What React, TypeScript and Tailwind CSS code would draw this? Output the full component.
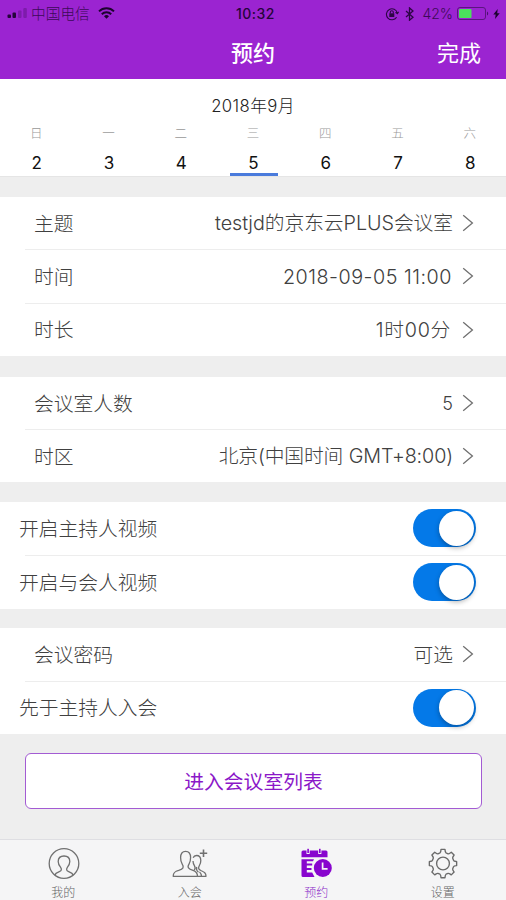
import type { ReactNode } from 'react';

function Chevron() {
  return (
    <svg className="ml-[9px] h-[18px] w-3 shrink-0" viewBox="0 0 12 18" fill="none" stroke="#707070" strokeWidth="1.3">
      <path d="M1.2 1.2 10.4 9 1.2 16.8" />
    </svg>
  );
}

function Switch() {
  return (
    <div className="flex h-[38px] w-[63px] items-center justify-end rounded-full bg-[#0479e8] pr-[2px]">
      <div className="h-[35px] w-[35px] rounded-full bg-white shadow-[0_2px_5px_rgba(0,0,0,0.3)]" />
    </div>
  );
}

function Group({ className, children }: { className: string; children: ReactNode }) {
  return (
    <section className={`flex flex-col bg-white text-[19.75px] font-light text-[#404040] ${className}`}>{children}</section>
  );
}

function Divider() {
  return <div className="ml-[25px] h-px shrink-0 bg-[#ededed]" />;
}

function LinkRow({ label, value, valueClass = '' }: { label: string; value: string; valueClass?: string }) {
  return (
    <div className="flex min-h-0 flex-1 items-center pl-[34px] pr-[32px]">
      <span className="pt-[3px] leading-none">{label}</span>
      <span className={`ml-auto whitespace-pre pt-[2px] leading-none ${valueClass}`}>{value}</span>
      <Chevron />
    </div>
  );
}

function SwitchRow({ label, className = '' }: { label: string; className?: string }) {
  return (
    <div className={`flex min-h-0 flex-1 items-center justify-between pl-[19px] pr-[30px] ${className}`}>
      <span className="pt-[3px] leading-none">{label}</span>
      <Switch />
    </div>
  );
}

const days = [
  ['日', '2'],
  ['一', '3'],
  ['二', '4'],
  ['三', '5'],
  ['四', '6'],
  ['五', '7'],
  ['六', '8'],
];

function StatusBar() {
  return (
    <div className="grid h-[27px] grid-cols-3 items-center pl-[7px] pr-[6px] text-[14px] leading-none text-[#3b0a58]">
      <div className="flex items-center">
        <svg className="h-[10px] w-[21px]" viewBox="0 0 21 10" fill="#25053b">
          <rect x="0.5" y="6.5" width="3.5" height="3.5" rx="1" />
          <rect x="5.5" y="4.5" width="3.5" height="5.5" rx="1" />
          <rect x="11" y="2.5" width="3.5" height="7.5" rx="1" opacity="0.25" />
          <rect x="16.3" y="0" width="3.5" height="10" rx="1" opacity="0.25" />
        </svg>
        <span className="ml-[3px] pt-[2px] text-[14.7px] font-light">中国电信</span>
        <svg className="ml-[8px] h-[12px] w-[17px]" viewBox="0 0 17 12" fill="none" stroke="#1c032e" strokeWidth="2">
          <path d="M1 4.4a10.7 10.7 0 0 1 15 0M3.8 7.2a6.7 6.7 0 0 1 9.4 0" />
          <path d="M8.5 11.8 6 9.3a3.6 3.6 0 0 1 5 0z" fill="#1c032e" stroke="none" />
        </svg>
      </div>
      <span className="pl-[4px] text-center text-[14px] font-medium tracking-[0.5px] text-[#25053b]">10:32</span>
      <div className="flex items-center justify-end">
        <svg className="h-[14px] w-[14px]" viewBox="0 0 14 14" fill="none" stroke="#2c0644" strokeWidth="1.1">
          <path d="M11.6 10.2A5.5 5.5 0 1 1 12.3 6M10.4 5.4l2 1.4 1.3-2" />
          <rect x="4.3" y="6.3" width="5" height="3.7" fill="#2c0644" stroke="none" />
          <path d="M5.3 6.5V5.2a1.5 1.5 0 0 1 3 0v1.3" />
        </svg>
        <svg className="ml-[6px] h-[14px] w-[9px]" viewBox="0 0 9 14" fill="none" stroke="#2c0644" strokeWidth="1.3">
          <path d="M1 4l7 6.2-3.5 3V.9L8 3.9 1 10.1" />
        </svg>
        <span className="ml-[8px] pt-px text-[14px] font-light">42%</span>
        <svg className="ml-[4px] h-[13px] w-[32px]" viewBox="0 0 32 13" fill="none">
          <rect x="0.5" y="0.5" width="28" height="12" rx="2.5" stroke="#5c1480" />
          <rect x="2" y="2" width="12.5" height="9" rx="0.8" fill="#4be05c" />
          <path d="M30 4.5c1.6.7 1.6 3.3 0 4z" fill="#4c0f6e" />
        </svg>
        <svg className="ml-[4px] h-[10px] w-[7px]" viewBox="0 0 7 10" fill="#1c032e">
          <path d="M4.7 0 .3 5.6h2.4L2 10l4.7-5.8H4.2z" />
        </svg>
      </div>
    </div>
  );
}

function ProfileIcon() {
  return (
    <svg className="ml-px h-8 w-8" viewBox="0 0 32 32" fill="none" stroke="#707070" strokeWidth="1.3">
      <circle cx="16" cy="16.5" r="14.8" />
      <path d="M6.800 28.300c.5-2 2-2.600 4.500-3.600 2.400-1 2.600-2.500 1.200-4.500-1.600-2-2.300-3.600-2.300-5.700 0-3.500 2.200-5.500 5.800-5.500s5.800 2 5.800 5.500c0 2.100-.7 3.700-2.300 5.700-1.400 2-1.200 3.500 1.200 4.500 2.500 1 4 1.600 4.500 3.600" />
    </svg>
  );
}

function JoinIcon() {
  return (
    <svg className="h-8 w-[36px]" viewBox="0 0 36 32" fill="none" stroke="#707070" strokeWidth="1.3" strokeLinejoin="round">
      <path d="M1.200 29.300h24.300c0-3.800-1.500-4.900-4.500-5.900-4.400-1.400-6.300-3-3.900-6.600 1.200-1.800 1.500-3.800 1.500-6.200 0-4-1.600-6.300-5-6.300s-5 2.300-5 6.300c0 2.400.3 4.400 1.500 6.200 2.400 3.600 1.100 5.200-3.400 6.600-4 1.100-5.500 2.300-5.500 5.900z" />
      <path d="M21.200 10.700c.5-1.400 1.600-2.200 3.300-2.200 2.700 0 4.300 1.900 4.300 5 0 2-.5 3.500-1.400 5-1.300 2.300-1.200 3.700 1.400 5 3.200 1.500 5.200 2.200 5.200 5.800h-8.500M21 14c.1 2 .5 3.300 1.400 4.700 1.100 1.900 1.100 3.100-.2 4.500M24.700 20c-.7 2.400.2 3.900 1.700 5.200M29.500 29.300c-.1-1.900-.9-3.300-2-4.400" />
      <path d="M31.500 2.600V10M27.800 6.300h7.400" strokeWidth="1.600" />
    </svg>
  );
}

function BookingIcon() {
  return (
    <svg className="h-8 w-8" viewBox="0 0 32 32" fill="#8805ce">
      <path d="M3 3.500h3.500V7h3.200V3.500h8.500V7h3.200V3.500H26q1.500 0 1.500 1.500v5.300h-26V5q0-1.500 1.500-1.500z" />
      <rect x="7.300" y="1.800" width="1.600" height="4.200" />
      <rect x="19" y="1.800" width="1.600" height="4.200" />
      <path d="M1.500 12.300H14l-1 2H6.800v2.300h5.400v2H6.800V21h4.700v2H6.800v2.500h5.400l2.300 4.500H3q-1.500 0-1.500-1.500z" />
      <circle cx="22.800" cy="21" r="9" />
      <path d="M22.600 15.500v6.300h5" fill="none" stroke="#f5f5f5" strokeWidth="1.700" />
    </svg>
  );
}

function GearIcon() {
  return (
    <svg className="ml-px h-8 w-8" viewBox="-1 -1 34 34" fill="none" stroke="#6a6a6a" strokeWidth="1.450" strokeLinejoin="round">
      <path d="M13.900 1.500h4.200q.2 3.200 1.100 3.800l2.200.9c1 .3 1.800-.6 3.400-1.600l3 3c-1.200 1.700-1.900 2.400-1.500 3.400l.9 2.200c.4.900 1.400 1 3.300 1.300v4.200c-1.900.3-2.900.4-3.300 1.300l-.9 2.200c-.4 1 .3 1.700 1.500 3.400l-3 3c-1.600-1-2.400-1.900-3.400-1.600l-2.200.9q-.9.6-1.100 3.800h-4.200q-.2-3.200-1.100-3.800l-2.200-.9c-1-.3-1.800.6-3.400 1.600l-3-3c1.200-1.700 1.900-2.400 1.500-3.400l-.9-2.200c-.4-.9-1.400-1-3.300-1.300v-4.200c1.900-.3 2.900-.4 3.300-1.300l.9-2.200c.4-1-.3-1.700-1.500-3.400l3-3c1.600 1 2.400 1.900 3.400 1.600l2.200-.9q.9-.6 1.100-3.800z" />
      <circle cx="16" cy="16.500" r="6.800" />
    </svg>
  );
}

const tabs = [
  { label: '我的', icon: <ProfileIcon />, color: 'text-[#666]' },
  { label: '入会', icon: <JoinIcon />, color: 'text-[#666]' },
  { label: '预约', icon: <BookingIcon />, color: 'text-[#8b2bc8]' },
  { label: '设置', icon: <GearIcon />, color: 'text-[#666]' },
];

export default function App() {
  return (
    <div className="flex h-[900px] w-[506px] flex-col overflow-hidden bg-[#eeeeee] font-['Inter','Noto_Sans_CJK_SC',sans-serif]">
      <header className="flex h-[79px] shrink-0 flex-col bg-[#9b24d1]">
        <StatusBar />
        <div className="grid flex-1 grid-cols-3 items-center px-[25px] text-[22px] leading-none text-white">
          <span />
          <span className="text-center font-medium">预约</span>
          <span className="text-right">完成</span>
        </div>
      </header>

      <section className="flex h-[98px] shrink-0 flex-col border-b border-[#e5e5e5] bg-white">
        <h2 className="mt-[17px] text-center text-[16.700px] font-light leading-[20px] tracking-[0.4px] text-[#222]">2018年9月</h2>
        <div className="mt-[8px] grid flex-1 grid-cols-7">
          {days.map(([name, date]) => (
            <div key={date} className="flex flex-col items-center">
              <span className="mt-px text-[12.500px] font-light leading-[18px] text-[#999]">{name}</span>
              <span className="mt-[10px] pl-px text-[17px] leading-[20px] text-[#111]">{date}</span>
              {date === '5' && <div className="h-[3px] w-12 translate-x-px bg-[#4a7bdc]" />}
            </div>
          ))}
        </div>
      </section>

      <Group className="mt-5 h-[159px]">
        <LinkRow label="主题" value="testjd的京东云PLUS会议室" valueClass="tracking-[-0.05px]" />
        <Divider />
        <LinkRow label="时间" value="2018-09-05 11:00" valueClass="mr-px tracking-[0.5px]" />
        <Divider />
        <LinkRow label="时长" value="1时00分" valueClass="mr-[2px] tracking-[0.7px]" />
      </Group>

      <Group className="mt-[21px] h-[105px]">
        <LinkRow label="会议室人数" value="5" valueClass="text-[18px]" />
        <Divider />
        <LinkRow label="时区" value="北京(中国时间 GMT+8:00)" valueClass="tracking-[-0.12px]" />
      </Group>

      <Group className="mt-5 h-[107px]">
        <SwitchRow label="开启主持人视频" className="pb-px" />
        <Divider />
        <SwitchRow label="开启与会人视频" className="pb-px" />
      </Group>

      <Group className="mt-[19px] h-[106px]">
        <LinkRow label="会议密码" value="可选" valueClass="pt-[3px]" />
        <Divider />
        <SwitchRow label="先于主持人入会" />
      </Group>

      <button className="mx-[25px] mt-[19px] h-[56px] w-[457px] shrink-0 rounded-[6px] border border-[#a35bd3] bg-white pt-[3px] text-[19.800px] leading-none text-[#8b18c8]">
        进入会议室列表
      </button>

      <nav className="mt-auto grid h-[61px] shrink-0 grid-cols-4 border-t border-[#dedee2] bg-[#f5f5f6]">
        {tabs.map((tab) => (
          <div key={tab.label} className="flex flex-col items-center pt-[7px]">
            {tab.icon}
            <span className={`mt-[7px] text-[12px] font-light leading-[14px] ${tab.color}`}>{tab.label}</span>
          </div>
        ))}
      </nav>
    </div>
  );
}
